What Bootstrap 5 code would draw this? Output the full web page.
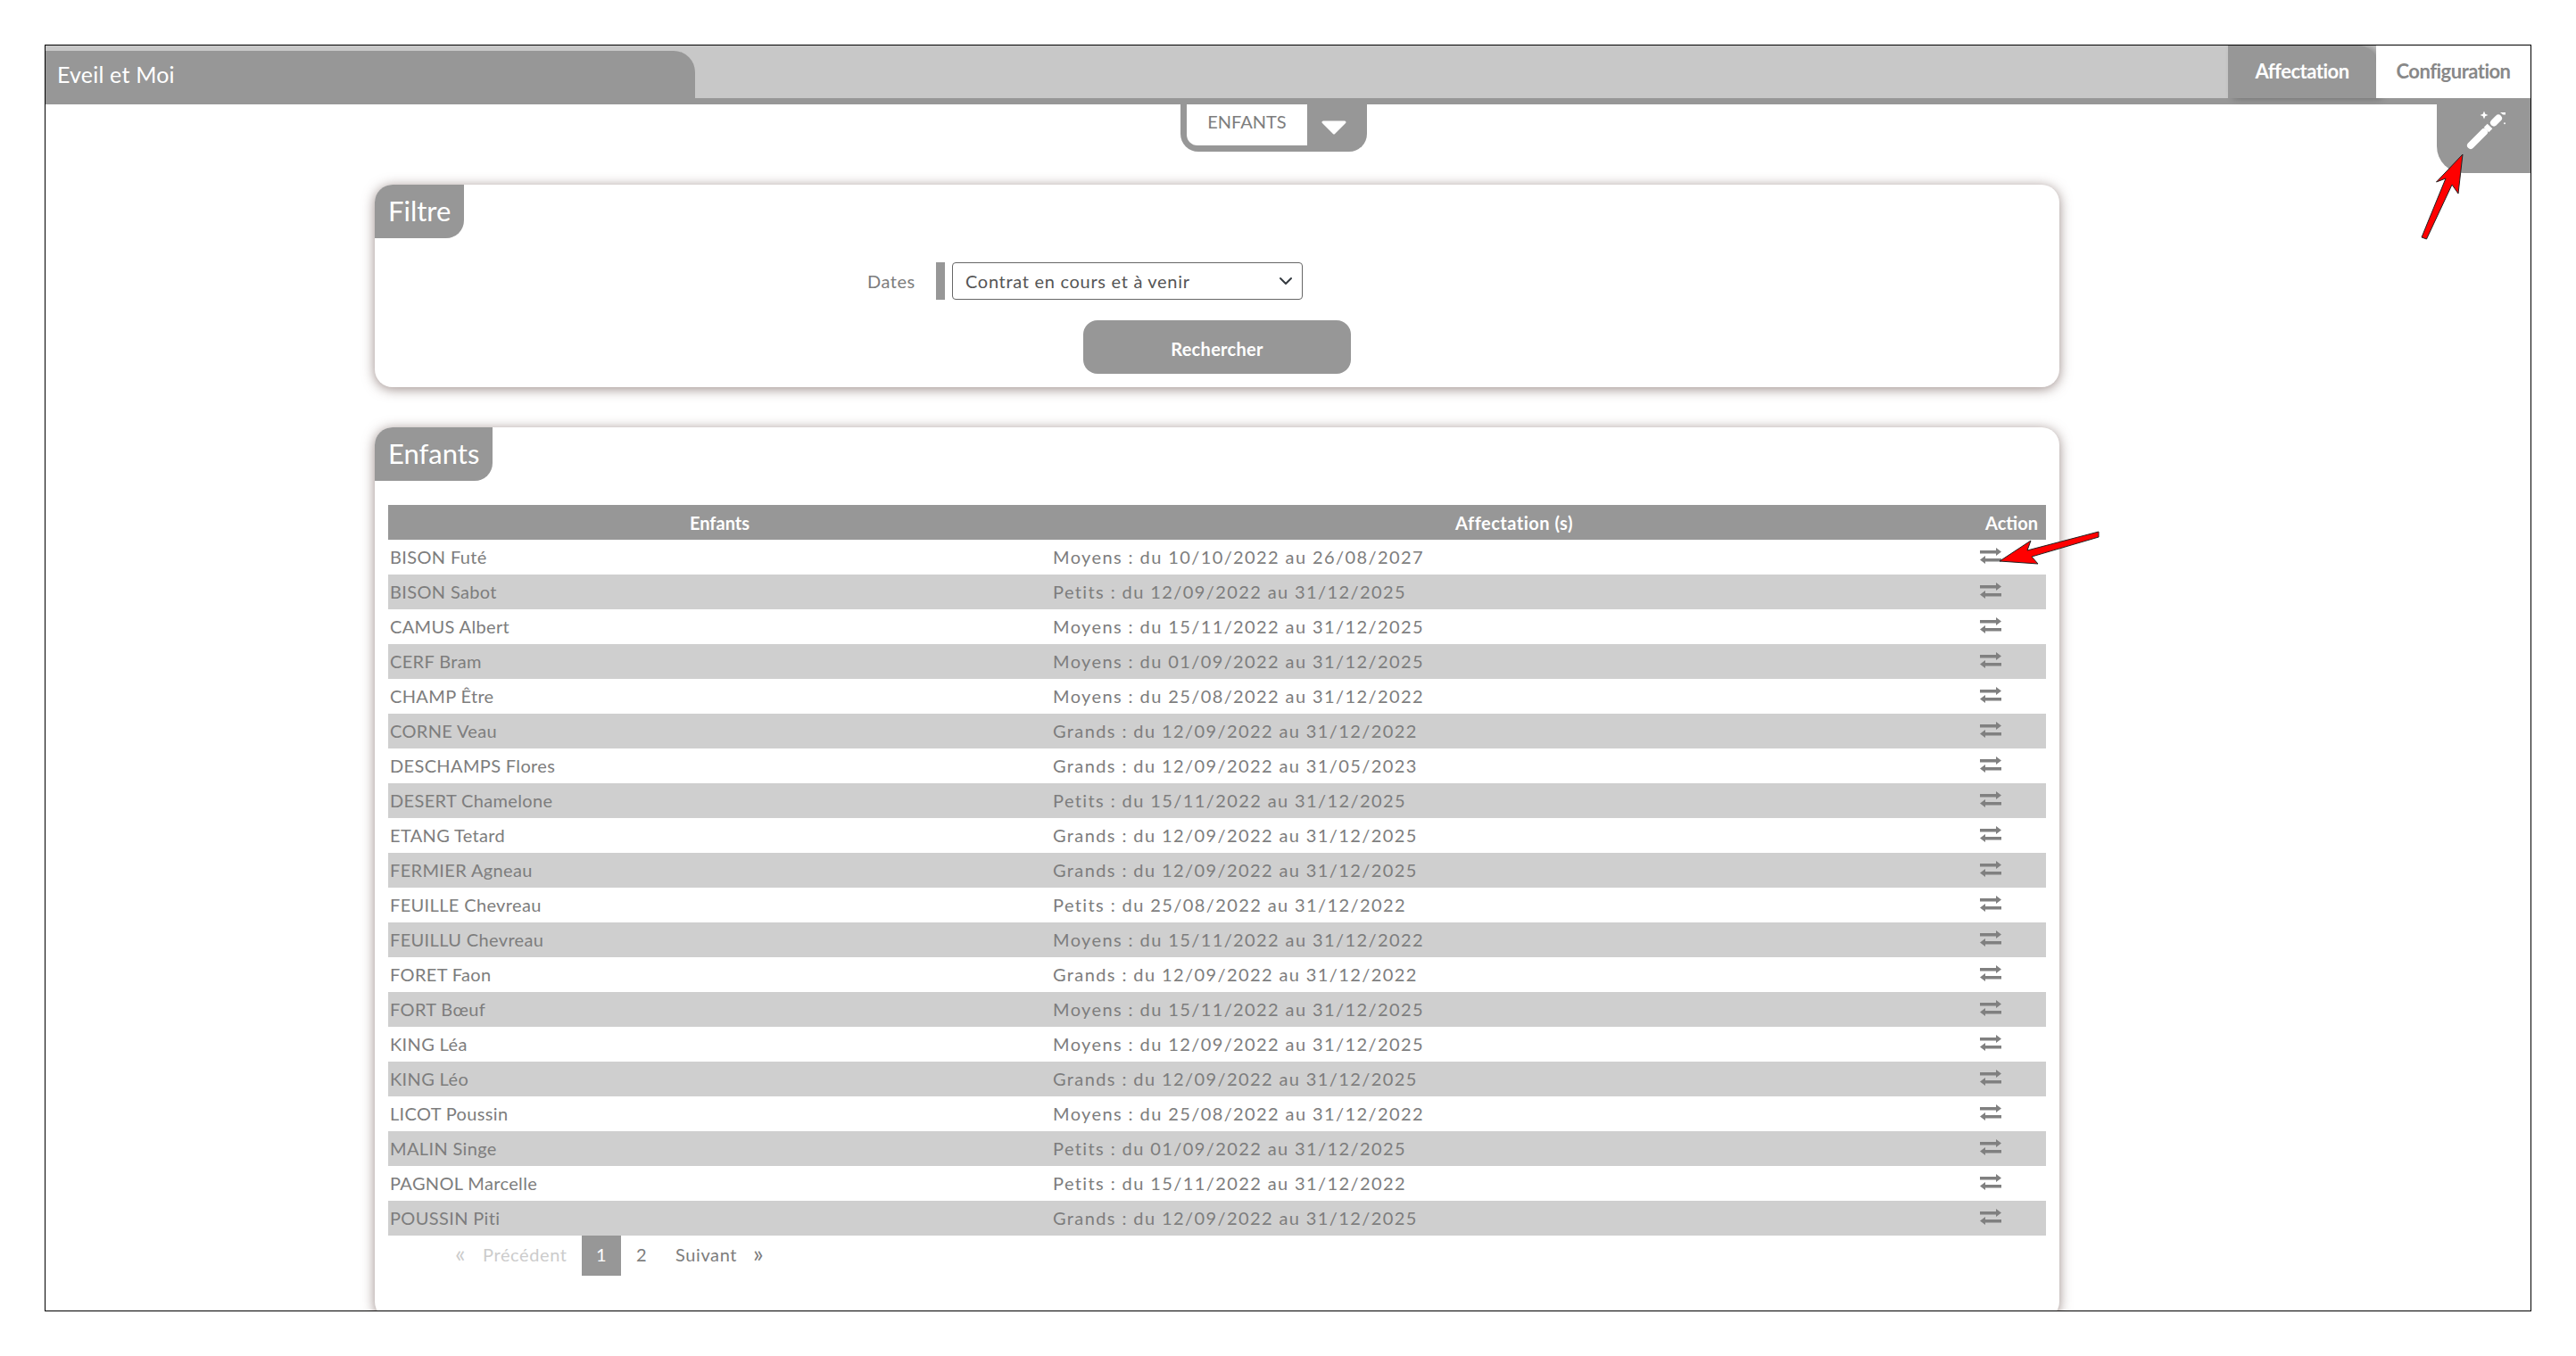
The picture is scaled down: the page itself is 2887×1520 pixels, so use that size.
<!DOCTYPE html>
<html lang="fr"><head><meta charset="utf-8"><title>Eveil et Moi</title>
<link rel="stylesheet" href="https://cdn.jsdelivr.net/npm/bootstrap@5.3.0/dist/css/bootstrap.min.css">
<style>
body{background:#fff;font-family:Lato,"Noto Sans",sans-serif;color:#7d7d7d;font-size:20px}
.frame{margin:50px 0 0 50px;width:2787px;height:1420px;border:1px solid #000;overflow:hidden;position:relative}
.topbar{height:59px;background:#c8c8c8;position:relative}
.brandtab{position:absolute;left:0;top:6px;width:728px;height:60px;background:#979797;border-top-right-radius:24px;color:#fff;font-size:25px;letter-spacing:.2px;padding:8px 13px}
.strip{height:7px;background:#979797}
.apptabs{height:59px;padding-bottom:2px}
.tab-on{width:166px;background:#979797;color:#fff;border-top-right-radius:20px;font-weight:700;box-shadow:6px 0 8px rgba(0,0,0,.3)}
.tab-off{width:173px;background:#fff;color:#888;font-weight:700}
.tab-on,.tab-off{font-size:22px;letter-spacing:-.5px}
.modul{position:absolute;left:1272px;top:66px;width:209px;height:53px;background:#979797;border-radius:0 0 20px 20px;padding-left:7px;display:flex;align-items:flex-start}
.modul span{width:135px;height:46px;background:#fff;border-bottom-left-radius:12px;text-align:center;line-height:38px;color:#7d7d7d}
.tri{margin:18px 0 0 16px;display:block}
.wand{position:absolute;right:0;top:66px;width:105px;height:77px;background:#979797;border-bottom-left-radius:30px}
.anno{position:absolute;left:-51px;top:-51px;pointer-events:none}
.boxes{width:1888px;margin:90px 0 0 369px}
.panel{background:#fff;border-radius:20px;box-shadow:0 2px 14px rgba(100,75,70,.65);position:relative}
.ptitle{display:block;width:fit-content;background:#979797;color:#fff;font-size:31px;padding:0 15px;height:60px;line-height:58px;border-radius:20px 0 20px 0}
.p1{height:227px}
.p2{height:1000px;margin-top:45px}
.fline{display:flex;align-items:center;height:42px;margin-top:27px;padding-left:552px}
.fline label{width:77px;color:#7d7d7d;letter-spacing:.5px}
.fbar{width:10px;height:42px;background:#979797;margin-right:8px}
.fsel{width:393px;height:42px;padding:0 0 0 14px;font-size:20px;letter-spacing:.7px;color:#555;border:1px solid #666;border-radius:4px;font-family:inherit;background-position:right 7px center;background-size:22px 16px}
.fbtn{display:block;width:300px;height:60px;margin:23px 0 0 794px;padding-top:10px;background:#979797;color:#fff;border:0;border-radius:16px;font-weight:700;font-size:20px;letter-spacing:.3px}
.tw{padding:27px 15px 0 15px}
.kids{width:100%;margin:0;table-layout:fixed;--bs-table-bg:transparent;--bs-table-color:#7d7d7d;color:#7d7d7d}
.kids th,.kids td{padding:0 2px 2px;height:39px;border:0;vertical-align:middle;font-weight:400;line-height:1;box-shadow:none;letter-spacing:.35px}
.kids td.dates{letter-spacing:1.4px}
.kids td.swap{padding:0 0 3px 3px}
.swap svg{display:block}
.kids thead th{background:#979797;color:#fff;font-weight:700;text-align:center;font-size:20px;letter-spacing:0;padding:0 2px}
.kids thead th.aff{letter-spacing:.5px}
.kids thead th.act{text-align:right;padding-right:9px}
.kids tbody tr:nth-child(even) td{background:#cfcfcf}
.pag{display:flex;margin:0 0 0 75px;height:45px;align-items:center;list-style:none;padding:0;letter-spacing:.6px}
.pag li{height:45px;line-height:43px}
.pag .off{color:#ccc}
.pag .gl{font-size:27px;line-height:40px}
.pag .cur{background:#979797;color:#fff;width:44px;text-align:center}
.pag .p-two{margin-left:17px;width:44px}
.pag .p-next{width:87px}
.pag .p-prevg{width:31px}
.pag .p-prev{width:111px}
</style></head><body>
<div class="frame">
 <div class="topbar d-flex justify-content-end">
  <div class="brandtab">Eveil et Moi</div>
  <div class="tab-on apptabs d-flex align-items-center justify-content-center">Affectation</div>
  <div class="tab-off apptabs d-flex align-items-center justify-content-center">Configuration</div>
 </div>
 <div class="strip"></div>
 <div class="modul"><span>ENFANTS</span><svg class="tri" width="28" height="16" viewBox="0 0 28 16"><path d="M2 2h24L14 14z" fill="#fff" stroke="#fff" stroke-width="3" stroke-linejoin="round"/></svg></div>
 <div class="wand"><svg width="105" height="77" viewBox="0 0 105 77"><g fill="none" stroke="#fff" stroke-width="8"><path d="M38 46L53 31" stroke-linecap="round"/><path d="M55.500 28.500L59.500 24.500"/><path d="M64 20.500L69 15.500" stroke-linecap="round"/></g><path fill="#fff" d="M53 7.500l1.300 3.200 3.200 1.300-3.200 1.300-1.300 3.200-1.300-3.200-3.200-1.300 3.200-1.300zM71 9h6v2.500h-3zM76 20l1.200 1.200-1.200 1.200-1.200-1.200z"/></svg></div>
 <div class="boxes">
  <section class="panel p1">
   <div class="ptitle">Filtre</div>
   <div class="fline"><label>Dates</label><div class="fbar"></div><select class="form-select fsel"><option>Contrat en cours et à venir</option></select></div>
   <button class="btn fbtn" type="button">Rechercher</button>
  </section>
  <section class="panel p2">
   <div class="ptitle">Enfants</div>
   <div class="tw">
   <table class="table kids">
    <colgroup><col style="width:743px"><col style="width:1038px"><col></colgroup>
    <thead><tr><th>Enfants</th><th class="aff">Affectation (s)</th><th class="act">Action</th></tr></thead>
    <tbody id="rows"></tbody>
   </table>
   <ul class="pag">
    <li class="off gl p-prevg">«</li><li class="off p-prev">Précédent</li><li class="cur">1</li><li class="p-two">2</li><li class="p-next">Suivant</li><li class="gl">»</li>
   </ul>
   </div>
  </section>
 </div>
 <svg class="anno" width="2887" height="1520" viewBox="0 0 2887 1520">
  <path d="M2760 173l-5 44-7-10-28.500 61-5.500-2 27-66-10.500 4z" fill="#f00" stroke="#222" stroke-width="1"/>
  <path d="M2352 596v6l-75 22 7 8-43-3 35-23-4 11z" fill="#f00" stroke="#222" stroke-width="1"/>
 </svg>
</div>
<script>
var d=[["BISON Futé","Moyens : du 10/10/2022 au 26/08/2027"],["BISON Sabot","Petits : du 12/09/2022 au 31/12/2025"],["CAMUS Albert","Moyens : du 15/11/2022 au 31/12/2025"],["CERF Bram","Moyens : du 01/09/2022 au 31/12/2025"],["CHAMP Être","Moyens : du 25/08/2022 au 31/12/2022"],["CORNE Veau","Grands : du 12/09/2022 au 31/12/2022"],["DESCHAMPS Flores","Grands : du 12/09/2022 au 31/05/2023"],["DESERT Chamelone","Petits : du 15/11/2022 au 31/12/2025"],["ETANG Tetard","Grands : du 12/09/2022 au 31/12/2025"],["FERMIER Agneau","Grands : du 12/09/2022 au 31/12/2025"],["FEUILLE Chevreau","Petits : du 25/08/2022 au 31/12/2022"],["FEUILLU Chevreau","Moyens : du 15/11/2022 au 31/12/2022"],["FORET Faon","Grands : du 12/09/2022 au 31/12/2022"],["FORT Bœuf","Moyens : du 15/11/2022 au 31/12/2025"],["KING Léa","Moyens : du 12/09/2022 au 31/12/2025"],["KING Léo","Grands : du 12/09/2022 au 31/12/2025"],["LICOT Poussin","Moyens : du 25/08/2022 au 31/12/2022"],["MALIN Singe","Petits : du 01/09/2022 au 31/12/2025"],["PAGNOL Marcelle","Petits : du 15/11/2022 au 31/12/2022"],["POUSSIN Piti","Grands : du 12/09/2022 au 31/12/2025"]];
var ic='<svg width="24" height="18" viewBox="0 0 24 18" fill="#808080"><path d="M0 3h18V0l6 4.500-6 4.500V6.500H0zM24 12H6V9l-6 4.500 6 4.500v-2.500h18z"/></svg>';
document.getElementById('rows').innerHTML=d.map(function(r){return '<tr><td>'+r[0]+'</td><td class="dates">'+r[1]+'</td><td class="swap">'+ic+'</td></tr>'}).join('');
</script>
<script src="https://cdn.jsdelivr.net/npm/bootstrap@5.3.0/dist/js/bootstrap.bundle.min.js"></script>
</body></html>
